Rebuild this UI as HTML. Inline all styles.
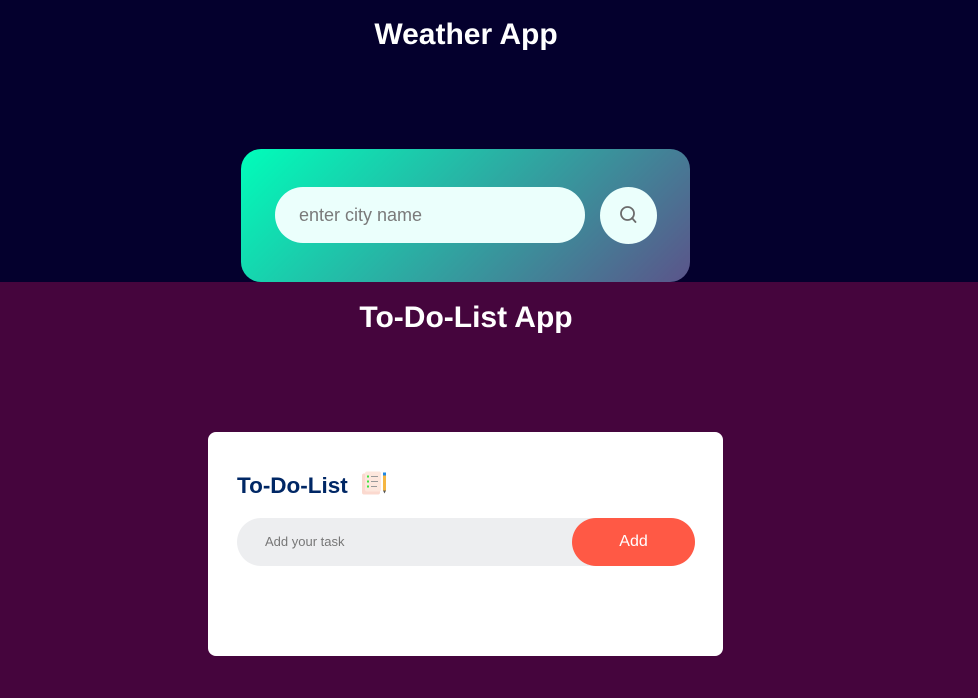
<!DOCTYPE html>
<html><head><style>
*{margin:0;padding:0;box-sizing:border-box}
body{width:978px;height:698px;overflow:hidden;font-family:"Liberation Sans",Arial,sans-serif;background:#45053d}
.top{position:absolute;left:0;top:0;width:978px;height:282px;background:#04002d}
h1{position:absolute;color:#fff;font-size:30px;font-weight:bold;text-align:center;width:200px}
.wcard{position:absolute;left:241px;top:149px;width:449px;height:133px;border-radius:20px;background:linear-gradient(135deg,#00feba,#5b548a)}
.winp{position:absolute;left:34px;top:38px;width:310px;height:56px;border-radius:30px;background:#ebfffc;color:#7a7a7a;font-size:18px;line-height:56px;padding-left:24px}
.wbtn{position:absolute;left:359px;top:38px;width:57px;height:57px;border-radius:50%;background:#ebfffc}
.tcard{position:absolute;left:208px;top:432px;width:515px;height:224px;border-radius:8px;background:#fff}
.tt{position:absolute;left:29px;top:38px;font-size:22.5px;font-weight:bold;color:#002765;white-space:nowrap}
.row{position:absolute;left:29px;top:86px;width:458px;height:48px;border-radius:30px;background:#edeef0}
.row span{position:absolute;left:28px;top:0;line-height:48px;font-size:13px;color:#777}
.add{position:absolute;right:0;top:0;width:123px;height:48px;border-radius:30px;background:#ff5945;color:#fff;font-size:16px;text-align:center;line-height:48px}
</style></head><body>
<div class="top"></div>
<h1 style="left:366px;top:18px">Weather App</h1>
<div class="wcard">
 <div class="winp">enter city name</div>
 <div class="wbtn"><svg width="57" height="57" viewBox="0 0 57 57"><circle cx="27.5" cy="26.5" r="6.5" fill="none" stroke="#6b6b6b" stroke-width="1.8"/><path d="M32 31l3.5 4" stroke="#6b6b6b" stroke-width="1.8" stroke-linecap="round"/></svg></div>
</div>
<h1 style="left:316px;top:301px;width:300px">To-Do-List App</h1>
<div class="tcard">
 <div class="tt">To-Do-List <svg width="28" height="27" viewBox="0 0 28 26" style="vertical-align:-4px;margin-left:6px"><rect x="2" y="3" width="18" height="21" rx="2" fill="#fbd9cf"/><rect x="5" y="1" width="16" height="20" rx="2" fill="#fde7dd"/><g fill="#3de33d"><rect x="7" y="5" width="2" height="2"/><rect x="7" y="10" width="2" height="2"/><rect x="7" y="15" width="2" height="2"/></g><g stroke="#999" stroke-width="1"><path d="M11 6h7M11 11h7M11 16h6"/></g><rect x="23" y="2" width="3" height="3" fill="#1e88e5"/><rect x="23" y="5" width="3" height="15" fill="#f5b642"/><path d="M23 20h3l-1.5 3z" fill="#555"/></svg></div>
 <div class="row"><span>Add your task</span><div class="add">Add</div></div>
</div>
</body></html>
